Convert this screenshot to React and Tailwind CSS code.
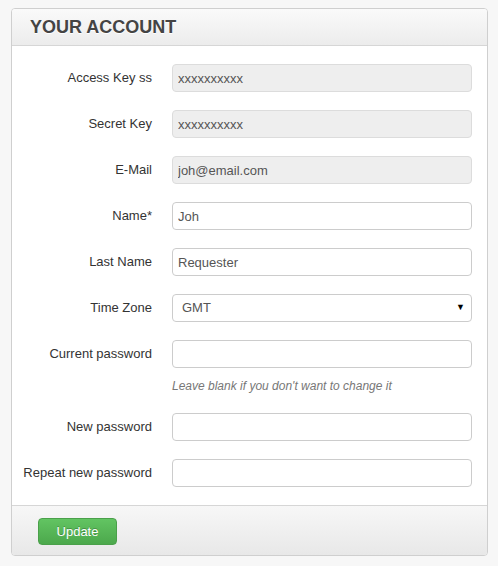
import React from "react";

const fields = [
  { label: "Access Key ss", value: "xxxxxxxxxx", disabled: true },
  { label: "Secret Key", value: "xxxxxxxxxx", disabled: true },
  { label: "E-Mail", value: "joh@email.com", disabled: true },
  { label: "Name*", value: "Joh" },
  { label: "Last Name", value: "Requester" },
];

const Row = ({ label, children }) => (
  <div className="grid grid-cols-[140px_300px] gap-x-5 items-start">
    <label className="h-7 flex items-center justify-end text-right text-[13px] text-[#333]">
      {label}
    </label>
    <div>{children}</div>
  </div>
);

const Input = ({ value = "", disabled }) => (
  <input
    readOnly
    value={value}
    disabled={disabled}
    className={
      "w-[300px] h-7 px-[5px] rounded-[4px] border text-[13px] text-[#555] outline-none " +
      (disabled ? "bg-[#eeeeee] border-[#dcdcdc]" : "bg-white border-[#cccccc]")
    }
  />
);

export default function App() {
  return (
    <div
      className="min-h-[566px] bg-[#f7f7f7] pt-[8px] pl-[11px]"
      style={{ fontFamily: '"Liberation Sans", Arial, sans-serif' }}
    >
      <div className="w-[477px] border border-[#cfcfcf] rounded-[4px] bg-white overflow-hidden">
        <div className="h-[37px] flex items-center pl-[18px] bg-gradient-to-b from-[#fafafa] to-[#ececec] border-b border-[#d6d6d6]">
          <h1 className="text-[18px] font-bold text-[#444] [text-shadow:0_1px_0_#fff]">
            YOUR ACCOUNT
          </h1>
        </div>

        <div className="pt-[18px] pb-[18px] flex flex-col gap-[18px]">
          {fields.map((f) => (
            <Row key={f.label} label={f.label}>
              <Input value={f.value} disabled={f.disabled} />
            </Row>
          ))}

          <Row label="Time Zone">
            <div className="w-[300px] h-7 rounded-[4px] border border-[#cccccc] bg-white flex items-center justify-between pl-[9px] pr-[6px] text-[13px] text-[#555]">
              <span>GMT</span>
              <span className="text-[9px] text-black">▼</span>
            </div>
          </Row>

          <Row label="Current password">
            <Input />
            <p className="mt-[9px] mb-[1px] h-[17px] text-[12px] italic text-[#777]">
              Leave blank if you don't want to change it
            </p>
          </Row>

          <Row label="New password">
            <Input />
          </Row>

          <Row label="Repeat new password">
            <Input />
          </Row>
        </div>

        <div className="h-[50px] border-t border-[#d6d6d6] bg-gradient-to-b from-[#f7f7f7] to-[#e8e8e8] pl-[26px] pt-[12px]">
          <button className="w-[79px] h-[27px] rounded-[4px] border border-[#4aa04a] bg-gradient-to-b from-[#62c462] to-[#4ca84c] text-white text-[13px] [text-shadow:0_-1px_0_rgba(0,0,0,0.25)]">
            Update
          </button>
        </div>
      </div>
    </div>
  );
}
